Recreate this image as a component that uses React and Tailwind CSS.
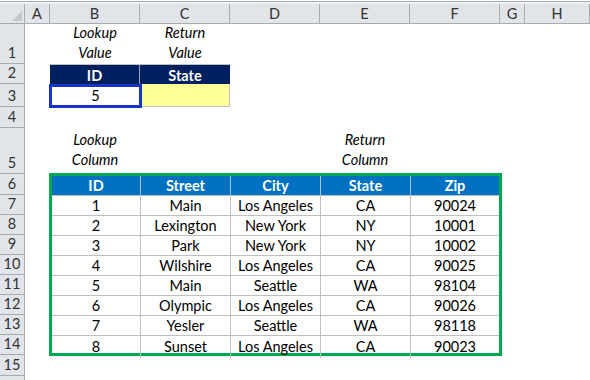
import React from "react";

const colHeads = [
  { label: "A", w: "w-[25px]" },
  { label: "B", w: "w-[90px]" },
  { label: "C", w: "w-[90px]" },
  { label: "D", w: "w-[90px]" },
  { label: "E", w: "w-[90px]" },
  { label: "F", w: "w-[90px]" },
  { label: "G", w: "w-[25px]" },
  { label: "H", w: "w-[65px]" },
];

const rowHeights = [
  "h-[40px]", "h-[20px]", "h-[23px]", "h-[21px]", "h-[46px]", "h-[21px]",
  "h-[20px]", "h-[20px]", "h-[20px]", "h-[20px]", "h-[20px]", "h-[20px]",
  "h-[20px]", "h-[20px]", "h-[21px]", "h-[20px]",
];

const people = [
  ["1", "Main", "Los Angeles", "CA", "90024"],
  ["2", "Lexington", "New York", "NY", "10001"],
  ["3", "Park", "New York", "NY", "10002"],
  ["4", "Wilshire", "Los Angeles", "CA", "90025"],
  ["5", "Main", "Seattle", "WA", "98104"],
  ["6", "Olympic", "Los Angeles", "CA", "90026"],
  ["7", "Yesler", "Seattle", "WA", "98118"],
  ["8", "Sunset", "Los Angeles", "CA", "90023"],
];

const Label = ({ lines, className }) => (
  <div className={`flex flex-col items-center justify-end italic text-black leading-[20px] ${className}`}>
    {lines.map((l) => (
      <span key={l}>{l}</span>
    ))}
  </div>
);

export default function App() {
  return (
    <div
      className="w-[590px] h-[380px] overflow-hidden bg-white text-[14.5px] text-black"
      style={{ fontFamily: "Lato, 'Open Sans', sans-serif" }}
    >
      {/* top strip */}
      <div className="h-[1px] bg-white" />
      <div className="h-[1px] bg-[#a9adb3]" />
      <div className="h-[2px] bg-[#eef0f2]" />

      {/* column headers */}
      <div className="flex h-[20px] bg-[#e1e4e8] border-b border-[#a8abb0] text-[#333]">
        <div className="w-[25px] shrink-0 border-r border-[#a8abb0] flex items-end justify-end p-[2px]">
          <svg width="10" height="10" viewBox="0 0 10 10">
            <polygon points="10,0 10,10 0,10" fill="#c4c7cc" />
          </svg>
        </div>
        {colHeads.map((c) => (
          <div
            key={c.label}
            className={`${c.w} shrink-0 border-r border-[#a8abb0] flex items-center justify-center`}
          >
            {c.label}
          </div>
        ))}
      </div>

      <div className="flex">
        {/* row headers */}
        <div className="w-[25px] shrink-0 flex flex-col bg-[#e1e4e8] border-r border-[#a8abb0] text-[#333]">
          {rowHeights.map((h, i) => (
            <div
              key={i}
              className={`${h} border-b border-[#a8abb0] flex items-end justify-center pb-[1px] leading-[18px]`}
            >
              {i < 15 ? i + 1 : ""}
            </div>
          ))}
        </div>

        {/* sheet body */}
        <div className="grid grid-cols-[25px_90px_90px_90px_90px_90px_25px_65px] grid-rows-[40px_20px_23px_21px_46px_21px_20px_20px_20px_20px_20px_20px_20px_20px_21px_20px]">
          <Label lines={["Lookup", "Value"]} className="col-start-2 row-start-1 pb-[1px]" />
          <Label lines={["Return", "Value"]} className="col-start-3 row-start-1 pb-[1px]" />

          {/* lookup value block */}
          <div className="col-start-2 col-span-2 row-start-2 grid grid-cols-[90px_90px] bg-[#002060] text-white font-bold border-t border-[#c0c0c0]">
            <div className="flex items-center justify-center border-r border-[#9aa3b8]">ID</div>
            <div className="flex items-center justify-center">State</div>
          </div>
          <div className="col-start-2 row-start-3 -ml-[1px] -mr-[2px] -mb-[1px] border-[3px] border-[#1636c8] bg-white flex items-center justify-center relative z-10">
            5
          </div>
          <div className="col-start-3 row-start-3 bg-[#ffff99] border-b border-r border-[#bfbfbf]" />

          <Label lines={["Lookup", "Column"]} className="col-start-2 row-start-5 pb-[4px]" />
          <Label lines={["Return", "Column"]} className="col-start-5 row-start-5 pb-[4px]" />

          {/* lookup table */}
          <div className="col-start-2 col-span-5 row-start-6 row-span-9 -ml-[1px] -mt-[1px] -mr-[2px] -mb-[1px] border-[3px] border-[#00a651] grid grid-cols-[89px_90px_90px_90px_88px] grid-rows-[19px_repeat(7,20px)_1fr]">
            {["ID", "Street", "City", "State", "Zip"].map((h, i) => (
              <div
                key={h}
                className={`bg-[#0070c0] text-white font-bold flex items-center justify-center ${
                  i < 4 ? "border-r border-[#9fc3e3]" : ""
                }`}
              >
                {h}
              </div>
            ))}
            {people.map((row) =>
              row.map((v, i) => (
                <div
                  key={row[0] + i}
                  className={`border-t border-[#c0c0c0] flex items-center justify-center ${
                    i < 4 ? "border-r" : ""
                  }`}
                >
                  {v}
                </div>
              ))
            )}
          </div>
        </div>
      </div>
    </div>
  );
}
